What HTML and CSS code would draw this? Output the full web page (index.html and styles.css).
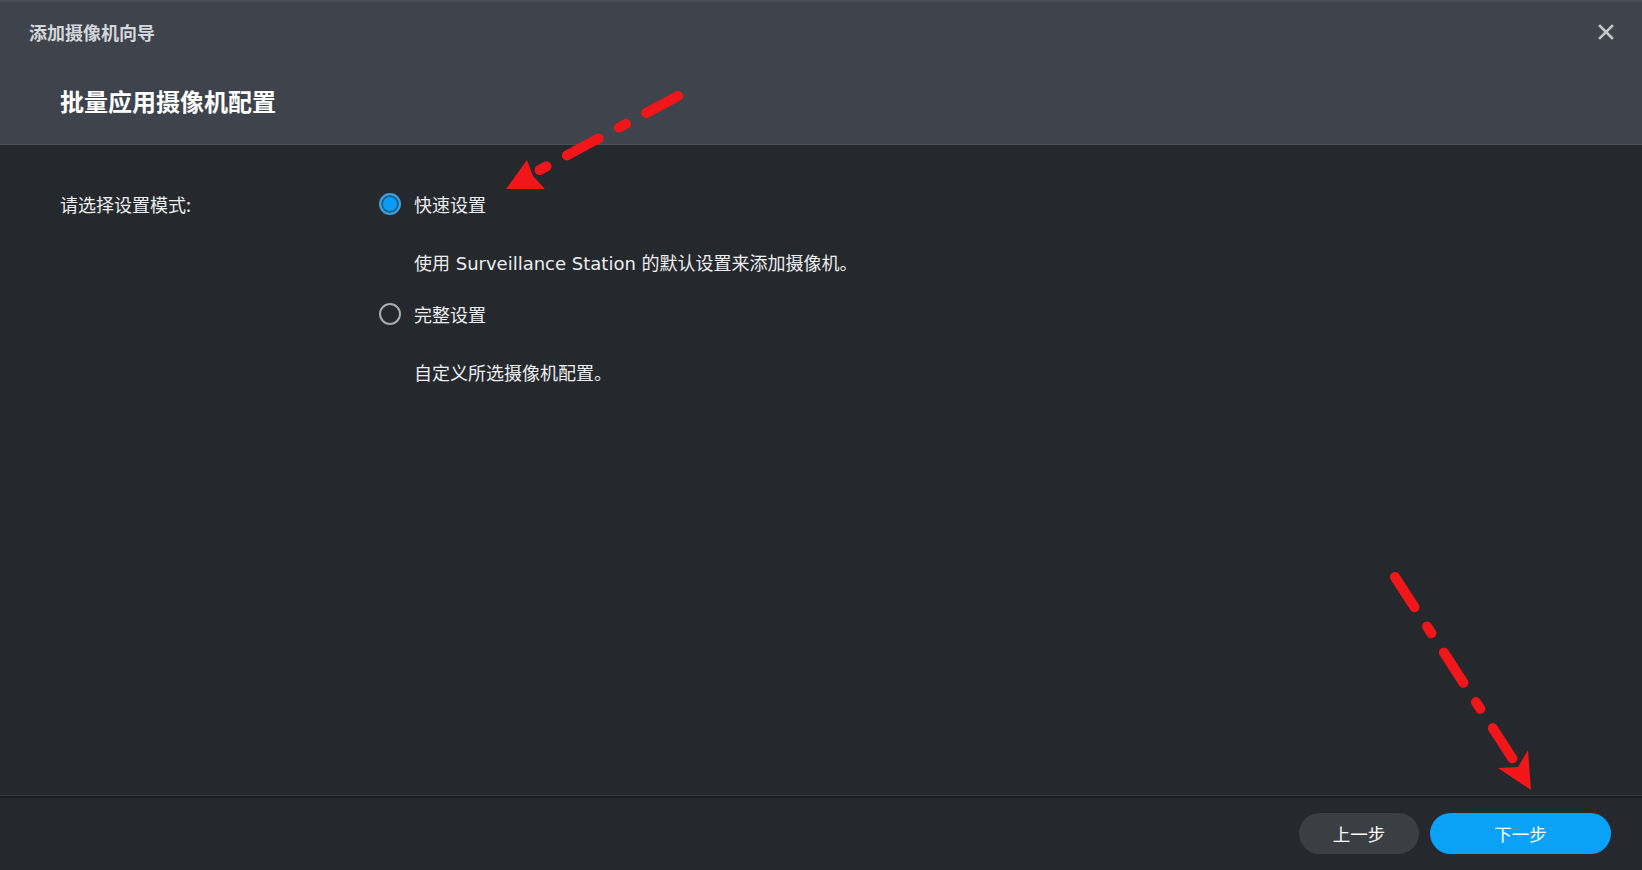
FILE: index.html
```html
<!DOCTYPE html>
<html lang="zh-CN">
<head>
<meta charset="utf-8">
<title>添加摄像机向导</title>
<link rel="stylesheet" href="styles.css">
</head>
<body>
<div class="wizard">
  <header class="wiz-header">
    <div class="title-row">
      <span class="win-title">添加摄像机向导</span>
      <button class="close-btn" aria-label="关闭">
        <svg width="16" height="16" viewBox="0 0 16 16"><path d="M2 2 L14 14 M14 2 L2 14" stroke="#c3c6ca" stroke-width="2.6" stroke-linecap="square"/></svg>
      </button>
    </div>
    <h1 class="step-title">批量应用摄像机配置</h1>
  </header>

  <main class="wiz-body">
    <div class="form-row">
      <div class="field-label">请选择设置模式:</div>
      <div class="options">
        <label class="option">
          <span class="radio checked"></span>
          <span class="option-text">快速设置</span>
        </label>
        <div class="option-desc first">使用 Surveillance Station 的默认设置来添加摄像机。</div>
        <label class="option">
          <span class="radio"></span>
          <span class="option-text">完整设置</span>
        </label>
        <div class="option-desc">自定义所选摄像机配置。</div>
      </div>
    </div>
  </main>

  <footer class="wiz-footer">
    <button class="btn btn-secondary">上一步</button>
    <button class="btn btn-primary">下一步</button>
  </footer>
</div>

<svg class="annotations" width="1642" height="870" viewBox="0 0 1642 870">
  <path d="M678 96 L534 173" stroke="#f0161a" stroke-width="10" stroke-linecap="round" fill="none" stroke-dasharray="36 23 8 23"/>
  <polygon points="506,189 527,160 533,176 545,189" fill="#f0161a"/>
  <path d="M1395 577 L1516 764" stroke="#f0161a" stroke-width="10" stroke-linecap="round" fill="none" stroke-dasharray="36 23 8 23"/>
  <polygon points="1531,790 1498,768 1518,767 1528,750" fill="#f0161a"/>
</svg>
</body>
</html>
```

FILE: styles.css
```css
* { box-sizing: border-box; }

html, body {
  margin: 0;
  padding: 0;
  width: 1642px;
  height: 870px;
  overflow: hidden;
  background: #25282c;
  font-family: "DejaVu Sans", "Noto Sans CJK SC", sans-serif;
  color: #e6e8ea;
}

.wizard {
  display: flex;
  flex-direction: column;
  height: 870px;
}

.wiz-header {
  height: 145px;
  background: #3e434c;
  border-top: 2px solid #4a4f57;
  border-bottom: 1px solid #4b5057;
  display: flex;
  flex-direction: column;
}

.title-row {
  display: flex;
  justify-content: space-between;
  align-items: center;
  height: 24px;
  margin-top: 18px;
  padding: 0 28px 0 29px;
}

.win-title {
  font-family: "Noto Sans CJK SC", sans-serif;
  font-size: 18px;
  font-weight: 700;
  color: #d4d7db;
  line-height: 24px;
}

.close-btn {
  background: none;
  border: 0;
  padding: 0;
  width: 16px;
  height: 16px;
  display: flex;
}

.step-title {
  margin: 41px 0 0 60px;
  font-family: "Noto Sans CJK SC", sans-serif;
  font-size: 24px;
  font-weight: 700;
  line-height: 32px;
  color: #ffffff;
}

.wiz-body {
  flex: 1;
  padding: 45px 0 0 60px;
}

.form-row {
  display: flex;
}

.field-label {
  width: 319px;
  font-size: 18px;
  line-height: 28px;
  font-family: "Noto Sans CJK SC", sans-serif;
  color: #eceef0;
}

.options {
  display: flex;
  flex-direction: column;
}

.option {
  display: flex;
  align-items: center;
  gap: 13px;
  height: 28px;
}

.radio {
  width: 22px;
  height: 22px;
  border-radius: 50%;
  border: 2px solid #a9acb0;
  flex: none;
}

.radio.checked {
  border: 2px solid #3f9fd8;
  background: #0a9bf5;
  box-shadow: inset 0 0 0 2px #1c5f8c;
}

.option-text {
  font-family: "Noto Sans CJK SC", sans-serif;
  font-size: 18px;
  line-height: 28px;
  color: #eceef0;
}

.option-desc {
  margin: 32px 0 0 35px;
  font-size: 18px;
  line-height: 28px;
  color: #eceef0;
}

.option-desc.first {
  margin-bottom: 22px;
}

.wiz-footer {
  height: 74px;
  border-top: 2px solid #1c1e21;
  box-shadow: 0 -1px 0 #34373c;
  display: flex;
  justify-content: flex-end;
  align-items: center;
  gap: 11px;
  padding: 0 31px 2px 0;
}

.btn {
  height: 41px;
  border: 0;
  border-radius: 21px;
  font-family: "Noto Sans CJK SC", sans-serif;
  font-size: 17.5px;
  color: #ffffff;
}

.btn-secondary {
  width: 120px;
  background: #3b3e43;
}

.btn-primary {
  width: 181px;
  background: #0aa2f7;
}

.annotations {
  position: absolute;
  left: 0;
  top: 0;
  pointer-events: none;
}
```
